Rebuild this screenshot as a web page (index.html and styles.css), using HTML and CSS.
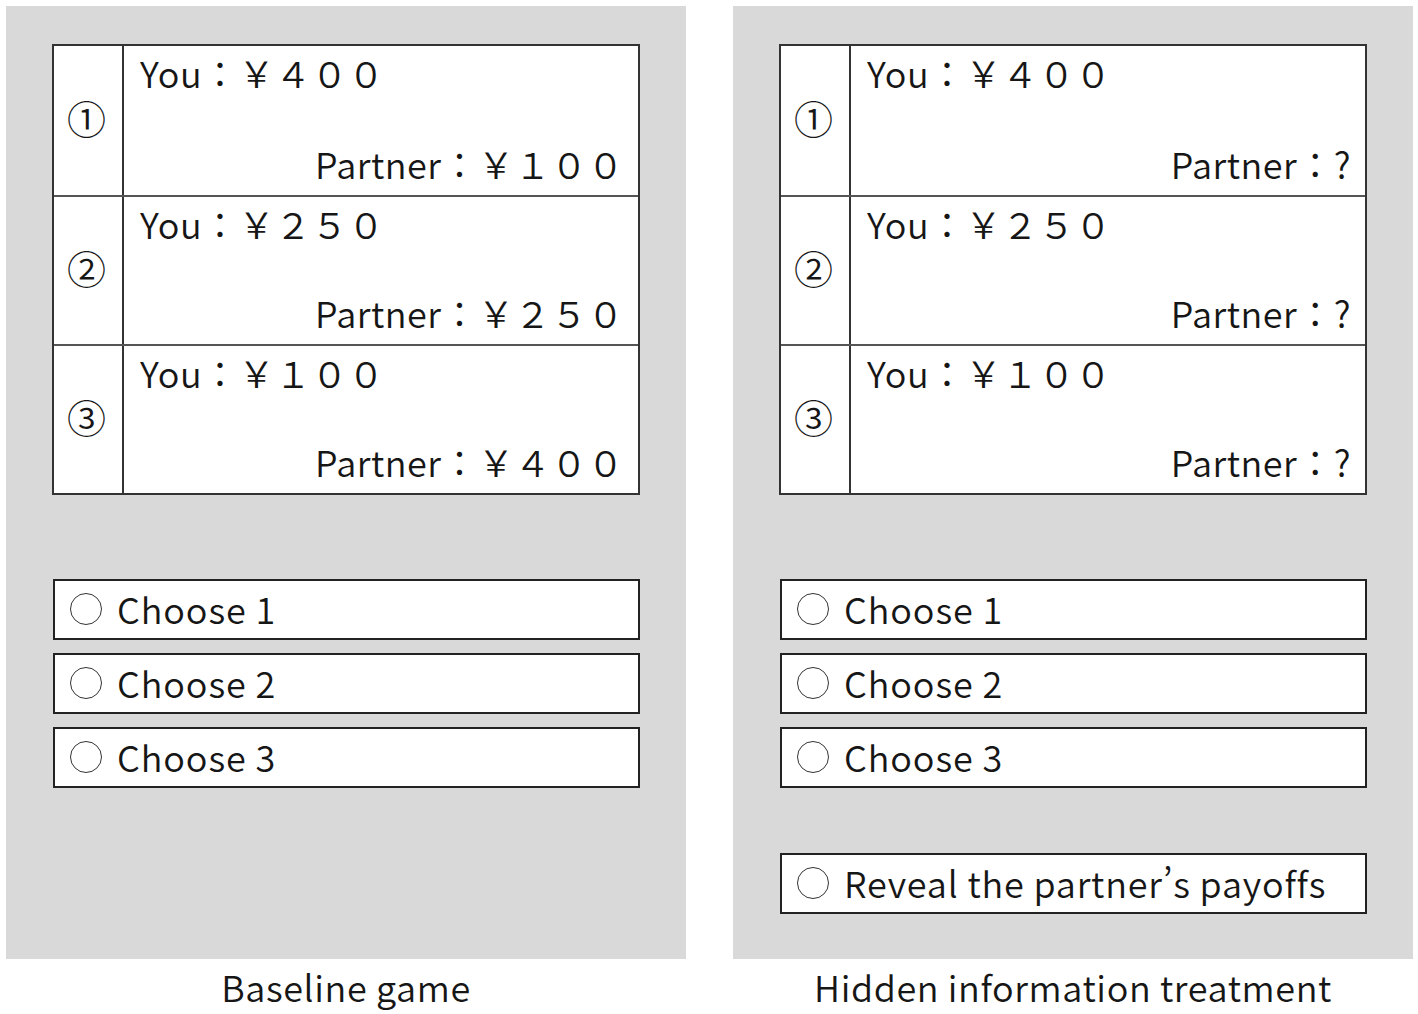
FILE: index.html
```html
<!DOCTYPE html>
<html lang="ja">
<head>
<meta charset="UTF-8">
<title>Baseline game / Hidden information treatment</title>
<link rel="stylesheet" href="styles.css">
</head>
<body>
<div class="figure">
  <div class="column">
    <div class="panel">
      <div class="payoffs">
        <div class="row">
          <div class="num">①</div>
          <div class="cell">
            <div class="you">You：￥４００</div>
            <div class="partner">Partner：￥１００</div>
          </div>
        </div>
        <div class="row">
          <div class="num">②</div>
          <div class="cell">
            <div class="you">You：￥２５０</div>
            <div class="partner">Partner：￥２５０</div>
          </div>
        </div>
        <div class="row">
          <div class="num">③</div>
          <div class="cell">
            <div class="you">You：￥１００</div>
            <div class="partner">Partner：￥４００</div>
          </div>
        </div>
      </div>
      <div class="choices">
        <div class="choice"><span class="radio"></span>Choose 1</div>
        <div class="choice"><span class="radio"></span>Choose 2</div>
        <div class="choice"><span class="radio"></span>Choose 3</div>
      </div>
    </div>
    <div class="caption">Baseline game</div>
  </div>

  <div class="column">
    <div class="panel">
      <div class="payoffs">
        <div class="row">
          <div class="num">①</div>
          <div class="cell">
            <div class="you">You：￥４００</div>
            <div class="partner">Partner：?</div>
          </div>
        </div>
        <div class="row">
          <div class="num">②</div>
          <div class="cell">
            <div class="you">You：￥２５０</div>
            <div class="partner">Partner：?</div>
          </div>
        </div>
        <div class="row">
          <div class="num">③</div>
          <div class="cell">
            <div class="you">You：￥１００</div>
            <div class="partner">Partner：?</div>
          </div>
        </div>
      </div>
      <div class="choices">
        <div class="choice"><span class="radio"></span>Choose 1</div>
        <div class="choice"><span class="radio"></span>Choose 2</div>
        <div class="choice"><span class="radio"></span>Choose 3</div>
      </div>
      <div class="choice reveal"><span class="radio"></span>Reveal the partner’s payoffs</div>
    </div>
    <div class="caption">Hidden information treatment</div>
  </div>
</div>
</body>
</html>
```

FILE: styles.css
```css
html, body {
  margin: 0;
  background-color: #fff;
  color: #161616;
  font-family: "Noto Sans CJK JP", "Noto Sans", sans-serif;
  font-weight: 350;
}
.figure {
  display: flex;
  gap: 47px;
  padding: 6px 0 0 6px;
}
.column {
  width: 680px;
}
.panel {
  background-color: #d9d9d9;
  height: 953px;
  box-sizing: border-box;
  padding: 38px 46px 0 46px;
}
.payoffs {
  background-color: #fff;
  border: 2px solid #333;
}
.row {
  display: grid;
  grid-template-columns: 70px 1fr;
  height: 149px;
  box-sizing: border-box;
}
.row + .row {
  border-top: 2px solid #555;
}
.num {
  border-right: 2px solid #333;
  display: flex;
  align-items: center;
  justify-content: center;
  font-size: 39px;
  padding: 0 3px 8px 0;
}
.cell {
  display: flex;
  flex-direction: column;
  justify-content: space-between;
  padding: 2px 14px 8px 16px;
  font-size: 36px;
  letter-spacing: 0.5px;
  line-height: 48px;
}
.partner {
  text-align: right;
}
.choices {
  margin-top: 84px;
  display: flex;
  flex-direction: column;
  gap: 13px;
}
.choice {
  background-color: #fff;
  border: 2px solid #222;
  height: 61px;
  box-sizing: border-box;
  display: flex;
  align-items: center;
  padding-left: 15px;
  font-size: 36px;
  letter-spacing: 0.9px;
  margin-left: 1px;
  padding-bottom: 4px;
}
.radio {
  width: 30px;
  height: 30px;
  border: 1.5px solid #333;
  border-radius: 50%;
  margin-right: 15px;
  flex-shrink: 0;
  margin-top: 2px;
}
.reveal {
  margin-top: 65px;
  letter-spacing: 0.8px;
}
.caption {
  text-align: center;
  font-size: 36px;
  letter-spacing: 0.6px;
  line-height: 54px;
}
```
